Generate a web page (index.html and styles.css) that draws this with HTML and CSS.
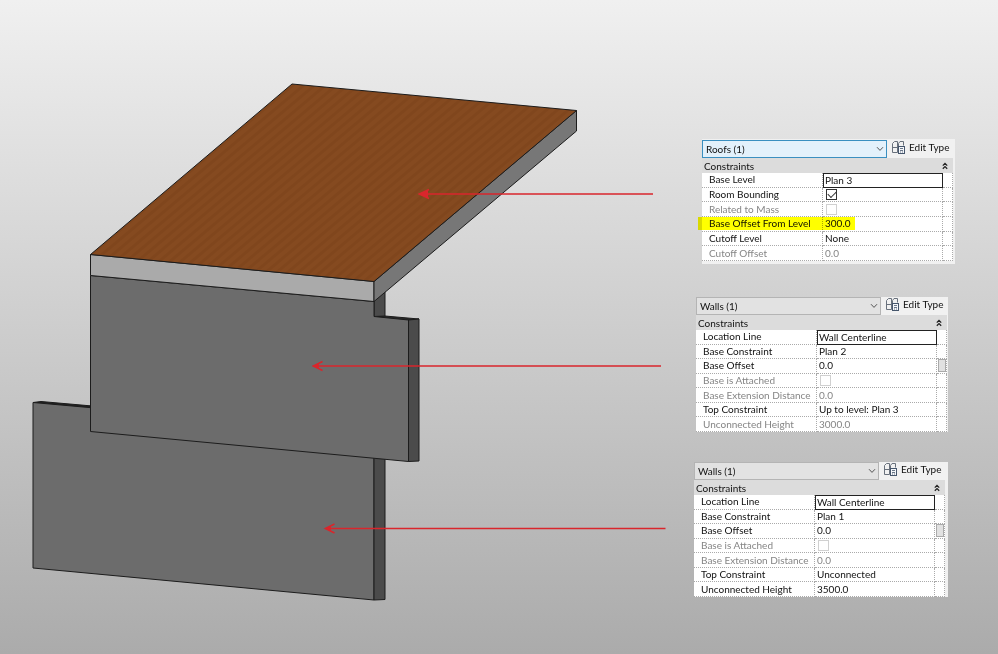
FILE: index.html
```html
<!DOCTYPE html>
<html lang="en">
<head>
<meta charset="utf-8">
<title>Roof and wall constraints</title>
<link rel="stylesheet" href="styles.css">
</head>
<body>
<svg class="symbols" aria-hidden="true">
  <symbol id="chevron" viewBox="0 0 8 6"><path d="M1 1.2 4 4.4 7 1.2" fill="none" stroke="#555" stroke-width="1"/></symbol>
  <symbol id="collapse" viewBox="0 0 6 8"><path d="M.8 3.6 3 1.4 5.2 3.6M.8 6.8 3 4.6 5.2 6.8" fill="none" stroke="#222" stroke-width="1.3"/></symbol>
  <symbol id="edit-type" viewBox="0 0 14 13">
    <path d="M.5 11.500V2.500L2.500.5H5.500V11.500zM.5 6.500H5.500M6.500 5.500V2.500L8 .5H11.500V4.500" fill="none" stroke="#69717c" stroke-width="1"/>
    <rect x="6.500" y="5.500" width="6" height="7" fill="#f5f7fa" stroke="#46566c"/>
    <path d="M8 7.500h3M8 9.500h3M8 11h1M10 11h1" stroke="#46566c" stroke-width=".8"/>
  </symbol>
</svg>
<main class="board">
  <svg class="scene" viewBox="0 0 694 654" role="img" aria-label="Roof above two stacked walls">
    <defs>
      <pattern id="wood" width="7" height="7" patternUnits="userSpaceOnUse" patternTransform="rotate(50)">
        <rect width="7" height="7" fill="#854a20"/><rect width="3" height="7" fill="#80461d"/>
      </pattern>
    </defs>
    <g stroke="#1c1c1c" stroke-width="1" stroke-linejoin="round">
      <path d="M33 402.5 41 401.5 90 405.8V408z" fill="#222"/>
      <path d="M33 402.5 374 433V600L33 568z" fill="#6c6c6c"/>
      <path d="M374 450h11V599.500L374 600z" fill="#4b4b4b"/>
      <path d="M374 290h11v27H374z" fill="#4b4b4b"/>
      <path d="M374 316.500 385 316 419 319 408.500 320.500z" fill="#2a2a2a"/>
      <path d="M90.500 275.500 374 301.500V316.500L408.500 320V461.500L90.500 431.500z" fill="#6c6c6c"/>
      <path d="M408.500 320 419 319V461L408.500 461.500z" fill="#4b4b4b"/>
      <path d="M90.500 254.500 374 281.500V301.500L90.500 275.500z" fill="#aaa"/>
      <path d="M374 281.500 576.500 110.500V131L374 301.500z" fill="#777"/>
      <path d="M90.500 254.500 292 84 576.500 110.500 374 281.500z" fill="url(#wood)"/>
    </g>
    <g fill="none" stroke="#d9262c" stroke-width="1.600">
      <path d="M420 194H653M429 189.500 419.500 194 429 198.500"/>
      <path d="M314 366H661M322.500 361.500 313.500 366 322.500 370.500"/>
      <path d="M326 528.500H665.500M334.500 524 325.500 528.500 334.500 533"/>
    </g>
    <g fill="#d9262c">
      <path d="M418 194 428 190V198z"/><path d="M312 366 319 363V369z"/><path d="M324 528.500 331 525.500V531.500z"/>
    </g>
  </svg>

  <div class="panels">
    <section class="panel panel-roof">
      <div class="bar">
        <label class="picker active"><select aria-label="Category"><option>Roofs (1)</option></select><svg><use href="#chevron"/></svg></label>
        <button class="edit"><svg><use href="#edit-type"/></svg>Edit Type</button>
      </div>
      <h2>Constraints <svg><use href="#collapse"/></svg></h2>
      <table class="six">
        <tr><th>Base Level</th><td class="focus">Plan 3</td><td></td></tr>
        <tr><th><label for="room">Room Bounding</label></th><td><input id="room" type="checkbox" checked></td><td></td></tr>
        <tr class="off"><th><label for="mass">Related to Mass</label></th><td><input id="mass" type="checkbox" disabled></td><td></td></tr>
        <tr><th class="marked">Base Offset From Level</th><td>300.0</td><td></td></tr>
        <tr><th>Cutoff Level</th><td>None</td><td></td></tr>
        <tr class="off"><th>Cutoff Offset</th><td>0.0</td><td></td></tr>
      </table>
    </section>

    <section class="panel panel-upper">
      <div class="bar">
        <label class="picker"><select aria-label="Category"><option>Walls (1)</option></select><svg><use href="#chevron"/></svg></label>
        <button class="edit"><svg><use href="#edit-type"/></svg>Edit Type</button>
      </div>
      <h2>Constraints <svg><use href="#collapse"/></svg></h2>
      <table class="seven">
        <tr><th>Location Line</th><td class="focus">Wall Centerline</td><td></td></tr>
        <tr><th>Base Constraint</th><td>Plan 2</td><td></td></tr>
        <tr><th>Base Offset</th><td>0.0</td><td><button class="assoc" aria-label="Associate parameter"></button></td></tr>
        <tr class="off"><th><label for="att2">Base is Attached</label></th><td><input id="att2" type="checkbox" disabled></td><td></td></tr>
        <tr class="off"><th>Base Extension Distance</th><td>0.0</td><td></td></tr>
        <tr><th>Top Constraint</th><td>Up to level: Plan 3</td><td></td></tr>
        <tr class="off"><th>Unconnected Height</th><td>3000.0</td><td></td></tr>
      </table>
    </section>

    <section class="panel panel-lower">
      <div class="bar">
        <label class="picker"><select aria-label="Category"><option>Walls (1)</option></select><svg><use href="#chevron"/></svg></label>
        <button class="edit"><svg><use href="#edit-type"/></svg>Edit Type</button>
      </div>
      <h2>Constraints <svg><use href="#collapse"/></svg></h2>
      <table class="seven">
        <tr><th>Location Line</th><td class="focus">Wall Centerline</td><td></td></tr>
        <tr><th>Base Constraint</th><td>Plan 1</td><td></td></tr>
        <tr><th>Base Offset</th><td>0.0</td><td><button class="assoc" aria-label="Associate parameter"></button></td></tr>
        <tr class="off"><th><label for="att1">Base is Attached</label></th><td><input id="att1" type="checkbox" disabled></td><td></td></tr>
        <tr class="off"><th>Base Extension Distance</th><td>0.0</td><td></td></tr>
        <tr><th>Top Constraint</th><td>Unconnected</td><td></td></tr>
        <tr><th>Unconnected Height</th><td>3500.0</td><td></td></tr>
      </table>
    </section>
  </div>
</main>
</body>
</html>
```
FILE: styles.css
```css
* { box-sizing: border-box; }
body {
  margin: 0;
  min-height: 100vh;
  background: linear-gradient(#f0f0f0, #ababab);
  font: 10px/13px Lato, "Open Sans", sans-serif;
  color: #111;
}
.symbols { position: absolute; width: 0; height: 0; }
.board { display: grid; grid-template-columns: minmax(0, 1fr) 304px; }
.scene { display: block; width: 100%; }
.panels { display: flex; flex-direction: column; align-items: flex-start; padding-top: 139px; }
.panel { background: #f1f1f1; width: 254px; }
.panel-roof { margin-left: 8px; margin-bottom: 33px; padding: 1px 2px 3px 0; width: 253px; }
.panel-upper { margin-left: 2px; margin-bottom: 30px; padding-right: 1px; width: 252px; }
.panel-lower { padding-right: 3px; }
.bar { display: flex; align-items: flex-start; gap: 5px; }
.picker { display: grid; flex: none; width: 185px; align-items: center; }
.picker select, .picker svg { grid-area: 1 / 1; }
.picker svg { width: 8px; height: 6px; justify-self: end; margin-right: 3px; pointer-events: none; }
.picker select {
  appearance: none;
  height: 18px;
  padding: 0 3px;
  border: 1px solid #b4b4b4;
  border-radius: 0;
  background: #e2e2e2;
  font: inherit;
  color: inherit;
}
.picker.active select { border-color: #3a8fc0; background: #e3f1fb; }
.edit {
  display: flex;
  align-items: center;
  gap: 3px;
  padding: 0;
  height: 15px;
  border: 0;
  background: none;
  font: inherit;
  color: inherit;
  white-space: nowrap;
}
.edit svg { width: 14px; height: 13px; }
h2 {
  display: flex;
  align-items: center;
  justify-content: space-between;
  margin: 0;
  height: 15px;
  padding: 1px 5px 0 2px;
  background: #dcdcdc;
  font: inherit;
}
h2 svg { width: 6px; height: 8px; }
table { width: 100%; table-layout: fixed; border-collapse: separate; border-spacing: 0; background: #fff; }
.six { height: 88px; }
.seven { height: 102px; }
th, td {
  padding: 0 0 0 2px;
  border-right: 1px dotted #aaa;
  border-bottom: 1px dotted #aaa;
  line-height: 13px;
  text-align: left;
  font-weight: 400;
  white-space: nowrap;
}
th { width: 121px; padding-left: 7px; }
td:last-child { width: 10px; padding: 0; }
.off { color: #858585; }
.focus { border: 1px solid #222; padding-left: 1px; line-height: 12px; }
.marked { position: relative; }
.marked::before {
  content: "";
  position: absolute;
  left: -4px;
  top: 0;
  width: 157px;
  height: 13px;
  background: #ff0;
  mix-blend-mode: multiply;
}
input {
  appearance: none;
  display: block;
  width: 11px;
  height: 11px;
  margin: 1px 0 0 1px;
  border: 1px solid #333;
  background: #fff;
}
input:disabled { border-color: #d0d0d0; }
input:checked { display: grid; }
input:checked::before {
  content: "";
  width: 7px;
  height: 4px;
  margin: 1px;
  border: solid #333;
  border-width: 0 0 1px 1px;
  transform: rotate(-45deg);
}
.assoc { display: block; width: 8px; height: 13px; margin-left: 1px; padding: 0; border: 1px solid #aaa; background: #e1e1e1; }
```
